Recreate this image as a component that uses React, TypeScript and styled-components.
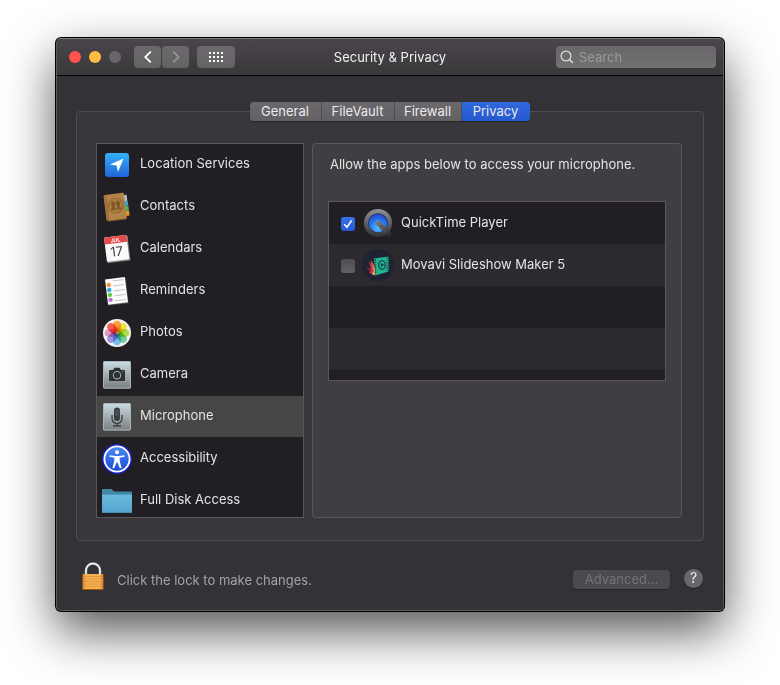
import React, { useState } from "react";
import styled, { createGlobalStyle, css } from "styled-components";

const GlobalStyle = createGlobalStyle`
  *, *::before, *::after { box-sizing: border-box; }
  body {
    margin: 0;
    background: #fff;
    font-family: Inter, "Liberation Sans", sans-serif;
    font-size: 13px;
    line-height: 16px;
    color: #e4e3e4;
    -webkit-font-smoothing: antialiased;
  }
  button, input {
    font: inherit;
    color: inherit;
    margin: 0;
  }
  #root { overflow: hidden; }
`;

const Window = styled.main`
  margin: 38px 56px 74px;
  border: 1px solid #5d5b5f;
  border-top-color: #7b797c;
  border-radius: 5px;
  background: #343236;
  box-shadow: 0 0 0 1px #000, 0 20px 50px rgba(0, 0, 0, 0.68);
`;

const Toolbar = styled.header`
  display: grid;
  grid-template-columns: 1fr auto 1fr;
  align-items: center;
  height: 37px;
  border-bottom: 1px solid #000;
  border-radius: 4px 4px 0 0;
  background: linear-gradient(#4a454b, #3a383b);
`;

const ToolbarStart = styled.div`
  display: flex;
  align-items: center;
  padding-left: 12px;
`;

const Lights = styled.div`
  display: flex;
  gap: 8px;
  margin-right: 13px;
`;

const Light = styled.button<{ $color: string }>`
  width: 12px;
  height: 12px;
  padding: 0;
  border: 0;
  border-radius: 50%;
  background: ${(p) => p.$color};
`;

const NavGroup = styled.div`
  display: flex;
  gap: 1px;
  margin-right: 8px;
`;

const ToolButton = styled.button<{ $wide?: boolean }>`
  display: grid;
  place-items: center;
  width: ${(p) => (p.$wide ? 38 : 27)}px;
  height: 22px;
  padding: 0;
  border: 0;
  border-radius: 4px;
  background: linear-gradient(#6c696d, #656266);
  color: #fff;
  &:disabled { color: #949295; }
`;

const Title = styled.h1`
  margin: 0;
  font-size: 13px;
  font-weight: 400;
  color: #f2f1f2;
`;

const SearchField = styled.label`
  display: flex;
  align-items: center;
  justify-self: end;
  gap: 5px;
  width: 160px;
  height: 22px;
  margin-right: 7px;
  padding-left: 4px;
  border-radius: 4px;
  background: linear-gradient(#6a676b, #727073);
  color: #dddcde;
`;

const SearchInput = styled.input`
  flex: 1;
  min-width: 0;
  padding: 0;
  border: 0;
  outline: 0;
  background: none;
  &::placeholder { color: #9b999c; opacity: 1; }
`;

const Content = styled.div`
  display: flex;
  flex-direction: column;
  padding: 26px 19px 20px;
`;

const Tabs = styled.div`
  position: relative;
  display: flex;
  align-self: center;
  height: 19px;
  margin-bottom: -10px;
  border-radius: 4px;
  overflow: hidden;
  background: #656367;
  box-shadow: 0 1px 1px rgba(0, 0, 0, 0.35);
`;

const Tab = styled.button<{ $width: number; $active: boolean }>`
  width: ${(p) => p.$width}px;
  padding: 0 1px 1px 0;
  border: 0;
  border-right: 1px solid #4e4c50;
  background: linear-gradient(#6a686c, #636165);
  color: #ebeaeb;
  &:last-child { border-right: 0; }
  ${(p) =>
    p.$active &&
    css`
      background: linear-gradient(#3068df, #2459cc);
    `}
`;

const GroupBox = styled.section`
  display: flex;
  gap: 8px;
  padding: 31px 21px 22px 19px;
  border: 1px solid #504e52;
  border-radius: 4px;
  background: #39373b;
`;

const Sidebar = styled.ul`
  flex: 0 0 208px;
  height: 375px;
  margin: 0;
  padding: 0;
  list-style: none;
  overflow: hidden;
  border: 1px solid #5a585b;
  background: #211f23;
`;

const SidebarItem = styled.button<{ $selected: boolean }>`
  display: flex;
  align-items: center;
  gap: 8px;
  width: 100%;
  height: 41px;
  margin-bottom: 1px;
  padding: 0 5px;
  border: 0;
  text-align: left;
  background: ${(p) => (p.$selected ? "#464646" : "transparent")};
  svg { flex: none; }
`;

const ItemText = styled.span`
  padding-bottom: 4px;
`;

const Panel = styled.div`
  flex: 1;
  min-width: 0;
  padding: 12px 15px;
  border: 1px solid #59575b;
  border-radius: 4px;
  background: #403e42;
`;

const PanelText = styled.p`
  margin: 0 0 29px;
  padding-left: 2px;
`;

const AppList = styled.ul`
  height: 180px;
  margin: 0;
  padding: 0;
  list-style: none;
  overflow: hidden;
  border: 1px solid #5d5a59;
`;

const AppRow = styled.li`
  height: 42px;
  background: #211f23;
  &:nth-child(even) { background: #2c2a2f; }
`;

const AppLabel = styled.label`
  display: flex;
  align-items: center;
  height: 100%;
  padding-left: 12px;
  svg { flex: none; }
`;

const CheckBox = styled.span`
  display: grid;
  place-items: center;
  width: 14px;
  height: 14px;
  margin: 2px 7px 0 0;
  & > * { grid-area: 1 / 1; }
  svg { pointer-events: none; }
`;

const CheckInput = styled.input`
  appearance: none;
  width: 14px;
  height: 14px;
  border-radius: 3px;
  background: linear-gradient(#4e4c50, #646266);
  &:checked { background: linear-gradient(#3a71e8, #245bd4); }
`;

const AppName = styled.span`
  padding: 0 0 2px 7px;
`;

const Footer = styled.footer`
  display: flex;
  align-items: center;
  margin-top: 21px;
  padding: 0 1px 0 6px;
`;

const LockButton = styled.button`
  display: flex;
  padding: 0;
  border: 0;
  background: none;
`;

const LockText = styled.span`
  flex: 1;
  padding: 8px 0 0 13px;
  color: #a3a2a4;
`;

const AdvancedButton = styled.button`
  width: 97px;
  height: 19px;
  margin: 6px 14px 0 0;
  padding: 0;
  border: 0;
  border-radius: 4px;
  background: #4c4a4e;
  box-shadow: 0 1px 1px rgba(0, 0, 0, 0.25);
  &:disabled { color: #757376; }
`;

const HelpButton = styled.button`
  width: 19px;
  height: 19px;
  margin-top: 4px;
  padding: 0;
  border: 0;
  border-radius: 50%;
  background: #69676b;
  color: #ebeaeb;
  font-size: 14px;
  box-shadow: 0 1px 1px rgba(0, 0, 0, 0.3);
`;

const Icon = ({ children }: { children: React.ReactNode }) => (
  <svg width="30" height="30" viewBox="0 0 30 30" aria-hidden="true">
    {children}
  </svg>
);

const LocationIcon = () => (
  <Icon>
    <defs>
      <linearGradient id="loc" x2="0" y2="1">
        <stop stopColor="#34b0fb" />
        <stop offset="1" stopColor="#2065d9" />
      </linearGradient>
    </defs>
    <rect x="3" y="3" width="24" height="24" rx="3" fill="url(#loc)" />
    <path d="M21.5 8.5 L16 22 L14.6 15.6 L8 14.4 Z" fill="#fff" />
  </Icon>
);

const ContactsIcon = () => (
  <Icon>
    <g transform="rotate(-7 15 15)">
      <path d="M22 4h4v6h-4z" fill="#b9c4cc" />
      <path d="M22 10h4.400v5h-4z" fill="#3da3d8" />
      <path d="M22 15h4.400v5h-4z" fill="#4bb65a" />
      <path d="M22 20h4.400v5h-4z" fill="#e89b22" />
      <path d="M3 25.500h20v3H5z" fill="#7a5227" />
      <rect x="3" y="1.500" width="20.500" height="26" rx="1.500" fill="#b28449" />
      <path d="M3.500 2v25h2.500v-25z" fill="#9c7038" />
      <circle cx="14" cy="13.500" r="8" fill="#946831" />
      <circle cx="14" cy="13.500" r="7" fill="#a77a40" />
      <path d="M8.500 17.500c0-1.500 2-1.500 2-3C9 12 9.500 9 11.500 9s2.500 3 1.200 5.500c0 1.500 1 1.500 1 3z" fill="#7c5625" />
      <path d="M14.300 17.500c0-1.500 1-1.500 1-3C14 12 14.500 9 16.500 9s2.500 3 1 5.500c0 1.500 2 1.500 2 3z" fill="#7c5625" />
    </g>
  </Icon>
);

const CalendarIcon = () => (
  <Icon>
    <g transform="rotate(-7 15 15)">
      <rect x="4" y="3" width="23" height="25" rx="1" fill="#85898b" />
      <rect x="3.500" y="2" width="22.500" height="24.500" rx="1" fill="#fafafa" />
      <path d="M3.500 9V3q0-1 1-1h20.500q1 0 1 1v6z" fill="#e64b4c" />
      <text x="14.500" y="7.800" fontSize="5" fontWeight="700" textAnchor="middle" fill="#fff">JUL</text>
      <text x="14.500" y="22" fontSize="13" textAnchor="middle" fill="#444">17</text>
    </g>
  </Icon>
);

const RemindersIcon = () => (
  <Icon>
    <g transform="rotate(-7 15 15)">
      <rect x="5" y="3" width="20" height="25.500" fill="#77777a" opacity=".6" />
      <rect x="4.500" y="2" width="20" height="25.500" fill="#fbfbfb" />
      {["#f5923b", "#37a5e6", "#5fcf4b", "#c070db"].map((color, i) => (
        <circle key={color} cx="7.500" cy={8 + i * 5} r="2.200" fill={color} />
      ))}
      <path d="M12 4.500h11M12 9.500h11M12 14.500h11M12 19.500h11M12 24.500h11" stroke="#bababa" strokeWidth=".8" />
    </g>
  </Icon>
);

const petals = ["#fba13c", "#f2de45", "#b5dc50", "#6fd09c", "#7cbdf3", "#a294dc", "#e396c8", "#f7605a"];

const PhotosIcon = () => (
  <Icon>
    <circle cx="15" cy="15" r="14" fill="#f4f4f4" />
    <g style={{ isolation: "isolate" }}>
      {petals.map((color, i) => (
        <rect
          key={color}
          x="11.200"
          y="2.700"
          width="7.600"
          height="11.800"
          rx="3.800"
          fill={color}
          transform={`rotate(${i * 45} 15 15)`}
          style={{ mixBlendMode: "multiply" }}
        />
      ))}
    </g>
  </Icon>
);

const Tile = ({ id, children }: { id: string; children: React.ReactNode }) => (
  <Icon>
    <defs>
      <linearGradient id={id} x2="0" y2="1">
        <stop stopColor="#c9dbe3" />
        <stop offset="1" stopColor="#7d7f80" />
      </linearGradient>
    </defs>
    <rect x="1" y="1" width="28" height="28" rx="1.500" fill="#5a6873" />
    <rect x="1.500" y="1.500" width="27" height="26.500" rx="1" fill={`url(#${id})`} stroke="#a9b4ba" />
    {children}
  </Icon>
);

const CameraIcon = () => (
  <Tile id="cam">
    <path d="M8 10h3l1.500-2.200h5L19 10h3q1 0 1 1v9q0 1-1 1H8q-1 0-1-1v-9q0-1 1-1z" fill="#2e3133" />
    <circle cx="15" cy="15.200" r="3.700" fill="none" stroke="#a3acb0" strokeWidth="1.100" />
    <circle cx="20.800" cy="11.700" r=".6" fill="#a3acb0" />
  </Tile>
);

const MicrophoneIcon = () => (
  <Tile id="mic">
    <rect x="12" y="5.500" width="6" height="13.500" rx="3" fill="#3a3e40" />
    <path d="M10 13v3.500a5 5 0 0 0 10 0V13M15 21.500v2.500M11 23.800h8" fill="none" stroke="#33373a" strokeWidth="1.200" />
    <path d="M13 9h4M13 11h4M13 13h4" stroke="#656b6e" strokeWidth=".6" />
  </Tile>
);

const AccessibilityIcon = () => (
  <Icon>
    <defs>
      <linearGradient id="acc" x2="0" y2="1">
        <stop stopColor="#4f8af0" />
        <stop offset="1" stopColor="#154cd7" />
      </linearGradient>
    </defs>
    <circle cx="15" cy="15" r="14.800" fill="#1b22e6" />
    <circle cx="15" cy="15" r="12.600" fill="url(#acc)" stroke="#fff" strokeWidth="1.800" />
    <circle cx="15" cy="8.300" r="2" fill="#fff" />
    <path d="M7.500 11.200 L13 12 h4 L22.500 11.200 v1.500 L17.500 13.800 L18 18 L19.600 24 L17.800 24.300 L15.500 18.500 h-1 L12.200 24.300 L10.400 24 L12 18 L12.500 13.800 L7.500 12.700 Z" fill="#fff" />
  </Icon>
);

const FolderIcon = () => (
  <Icon>
    <defs>
      <linearGradient id="fold" x2="0" y2="1">
        <stop stopColor="#69b8dc" />
        <stop offset="1" stopColor="#54a5cf" />
      </linearGradient>
    </defs>
    <path d="M0 9V4q0-1 1-1h8.500l2.500 2.500h17q1 0 1 1V10H0z" fill="#4687a8" />
    <path d="M0 7h30v19.500H0z" fill="#3c86a9" />
    <path d="M0 8.500h30v17.500q0 .8-.8 .8H.8Q0 26.800 0 26z" fill="url(#fold)" />
  </Icon>
);

const QuickTimeIcon = () => (
  <svg width="30" height="30" viewBox="0 0 30 30" aria-hidden="true">
    <defs>
      <linearGradient id="qt-rim" x2="0" y2="1">
        <stop stopColor="#8e9197" />
        <stop offset="1" stopColor="#303236" />
      </linearGradient>
      <radialGradient id="qt-core" cx=".5" cy=".75" r=".75">
        <stop stopColor="#56c2ff" />
        <stop offset=".6" stopColor="#2473ef" />
        <stop offset="1" stopColor="#2443c4" />
      </radialGradient>
      <linearGradient id="qt-tail" x1="12" y1="12" x2="28" y2="28" gradientUnits="userSpaceOnUse">
        <stop stopColor="#85888d" />
        <stop offset=".55" stopColor="#505358" />
        <stop offset="1" stopColor="#242629" />
      </linearGradient>
    </defs>
    <circle cx="15" cy="15" r="14" fill="url(#qt-rim)" />
    <circle cx="15" cy="15" r="9.800" fill="#252a3d" />
    <circle cx="15" cy="15" r="9.200" fill="url(#qt-core)" />
    <path d="M14.800 14.800L26.500 26.500" stroke="url(#qt-tail)" strokeWidth="5" strokeLinecap="round" />
  </svg>
);

const MovaviIcon = () => (
  <svg width="32" height="32" viewBox="0 0 32 32" aria-hidden="true">
    <circle cx="16" cy="16" r="16" fill="#1f2232" />
    <path d="M4 18.500l5 1.500L6.500 12l5 6.500L12 26.500 6.500 23 9 22z" fill="#c4353f" />
    <path d="M8.500 11l4 5v10l-2-5z" fill="#e0504c" />
    <path d="M9.500 25l2.500-3-1-5 2.500 3v6.500z" fill="#f59b69" />
    <path d="M12 9.500L26.500 7.500V22.500L13.500 26.500Z" fill="#23b391" />
    <path d="M13.500 10.500v15M25.200 8.500v14" stroke="#153f43" strokeWidth="1.200" strokeDasharray="1.200 1.200" />
    <ellipse cx="20" cy="16" rx="3.200" ry="4.300" fill="none" stroke="#154a4b" strokeWidth="1.300" />
    <path d="M19 14l3 1.800L19 18z" fill="#123c40" />
  </svg>
);

const LockIcon = () => (
  <svg width="22" height="28" viewBox="0 0 22 28" aria-hidden="true">
    <defs>
      <linearGradient id="lock-body" x2="1" y2="0">
        <stop stopColor="#d07a20" />
        <stop offset=".15" stopColor="#f7b253" />
        <stop offset=".85" stopColor="#f7b253" />
        <stop offset="1" stopColor="#c26c18" />
      </linearGradient>
    </defs>
    <path d="M4 13V8.500a7 7 0 0 1 14 0V13" fill="none" stroke="#8598a6" strokeWidth="2.600" />
    <path d="M4 13V8.500a7 7 0 0 1 14 0V13" fill="none" stroke="#f4f8fb" strokeWidth="1.500" />
    <rect x=".5" y="12" width="21" height="15.500" rx=".5" fill="url(#lock-body)" />
    <path d="M1 14.500h20M1 17h20M1 19.500h20M1 22h20M1 24.500h20" stroke="#d98d35" strokeWidth=".8" />
    <path d="M.5 27.500h21" stroke="#9c5213" />
  </svg>
);

const categories = [
  { name: "Location Services", Glyph: LocationIcon },
  { name: "Contacts", Glyph: ContactsIcon },
  { name: "Calendars", Glyph: CalendarIcon },
  { name: "Reminders", Glyph: RemindersIcon },
  { name: "Photos", Glyph: PhotosIcon },
  { name: "Camera", Glyph: CameraIcon },
  { name: "Microphone", Glyph: MicrophoneIcon },
  { name: "Accessibility", Glyph: AccessibilityIcon },
  { name: "Full Disk Access", Glyph: FolderIcon },
];

const tabs = [
  { name: "General", width: 72 },
  { name: "FileVault", width: 73 },
  { name: "Firewall", width: 67 },
  { name: "Privacy", width: 68 },
];

const apps = [
  { name: "QuickTime Player", Glyph: QuickTimeIcon },
  { name: "Movavi Slideshow Maker 5", Glyph: MovaviIcon },
];

const AppIconSlot = styled.span`
  display: grid;
  place-items: center;
  width: 32px;
  height: 32px;
`;

export default function App() {
  const [tab, setTab] = useState("Privacy");
  const [category, setCategory] = useState("Microphone");
  const [allowed, setAllowed] = useState<string[]>(["QuickTime Player"]);

  const toggle = (name: string) =>
    setAllowed((list) => (list.includes(name) ? list.filter((n) => n !== name) : [...list, name]));

  return (
    <>
      <GlobalStyle />
      <Window>
        <Toolbar>
          <ToolbarStart>
            <Lights>
              <Light $color="#ff5450" aria-label="Close" />
              <Light $color="#fdbc40" aria-label="Minimize" />
              <Light $color="#69666a" aria-label="Zoom" disabled />
            </Lights>
            <NavGroup>
              <ToolButton aria-label="Back">
                <svg width="8" height="12" viewBox="0 0 8 12">
                  <path d="M6.800 .6L1.200 6l5.600 5.400" fill="none" stroke="currentColor" strokeWidth="1.800" />
                </svg>
              </ToolButton>
              <ToolButton aria-label="Forward" disabled>
                <svg width="8" height="12" viewBox="0 0 8 12">
                  <path d="M1.200 .6L6.800 6l-5.600 5.400" fill="none" stroke="currentColor" strokeWidth="1.800" />
                </svg>
              </ToolButton>
            </NavGroup>
            <ToolButton $wide aria-label="Show All">
              <svg width="14" height="10" viewBox="0 0 14 10" fill="currentColor">
                {[0, 4, 8].map((y) =>
                  [0, 4, 8, 12].map((x) => <rect key={`${x}-${y}`} x={x} y={y} width="2" height="2" />)
                )}
              </svg>
            </ToolButton>
          </ToolbarStart>
          <Title>Security &amp; Privacy</Title>
          <SearchField>
            <svg width="14" height="14" viewBox="0 0 14 14" fill="none" stroke="currentColor" strokeWidth="1.200">
              <circle cx="6" cy="6" r="4.900" />
              <path d="M9.500 9.500L13 13" strokeWidth="1.400" />
            </svg>
            <SearchInput type="text" placeholder="Search" aria-label="Search" />
          </SearchField>
        </Toolbar>
        <Content>
          <Tabs role="tablist">
            {tabs.map(({ name, width }) => (
              <Tab
                key={name}
                role="tab"
                aria-selected={tab === name}
                $width={width}
                $active={tab === name}
                onClick={() => setTab(name)}
              >
                {name}
              </Tab>
            ))}
          </Tabs>
          <GroupBox>
            <Sidebar>
              {categories.map(({ name, Glyph }) => (
                <li key={name}>
                  <SidebarItem $selected={category === name} onClick={() => setCategory(name)}>
                    <Glyph />
                    <ItemText>{name}</ItemText>
                  </SidebarItem>
                </li>
              ))}
            </Sidebar>
            <Panel>
              <PanelText>Allow the apps below to access your microphone.</PanelText>
              <AppList>
                {apps.map(({ name, Glyph }) => (
                  <AppRow key={name}>
                    <AppLabel>
                      <CheckBox>
                        <CheckInput type="checkbox" checked={allowed.includes(name)} onChange={() => toggle(name)} />
                        {allowed.includes(name) && (
                          <svg width="14" height="14" viewBox="0 0 14 14" aria-hidden="true">
                            <path d="M3.200 7.300l2.700 3L10.700 3.400" fill="none" stroke="#fff" strokeWidth="1.600" />
                          </svg>
                        )}
                      </CheckBox>
                      <AppIconSlot>
                        <Glyph />
                      </AppIconSlot>
                      <AppName>{name}</AppName>
                    </AppLabel>
                  </AppRow>
                ))}
                <AppRow />
                <AppRow />
                <AppRow />
              </AppList>
            </Panel>
          </GroupBox>
          <Footer>
            <LockButton aria-label="Unlock">
              <LockIcon />
            </LockButton>
            <LockText>Click the lock to make changes.</LockText>
            <AdvancedButton disabled>Advanced...</AdvancedButton>
            <HelpButton aria-label="Help">?</HelpButton>
          </Footer>
        </Content>
      </Window>
    </>
  );
}
